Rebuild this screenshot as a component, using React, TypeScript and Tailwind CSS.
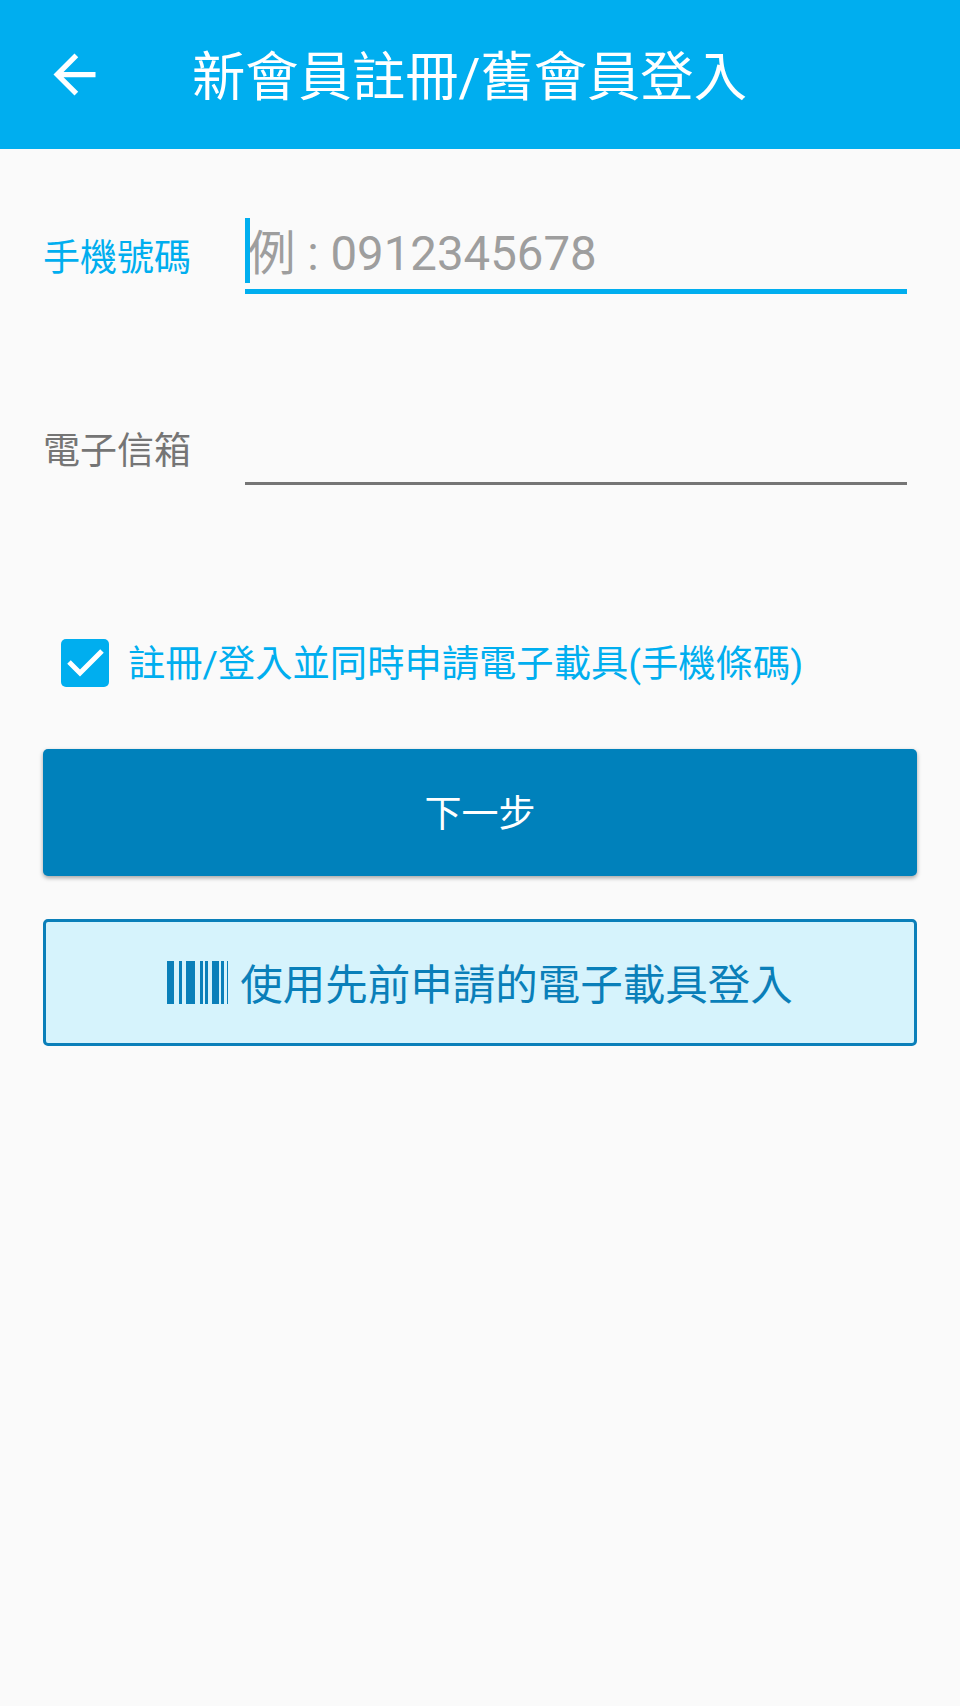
const fontStack = 'font-["Roboto","Noto_Sans_CJK_TC",sans-serif]';

function BackArrow() {
  return (
    <svg viewBox="0 0 24 24" className="h-[63px] w-[63px] shrink-0" fill="#ffffff">
      <path d="M20 11H7.83l5.59-5.59L12 4l-8 8 8 8 1.41-1.41L7.83 13H20v-2z" />
    </svg>
  );
}

function BarcodeIcon() {
  // bar positions read off the reference
  const bars = [
    [0, 7],
    [12, 3],
    [19, 9],
    [33, 3],
    [38, 3],
    [45, 7],
    [54, 3],
    [60, 1],
  ];
  return (
    <svg viewBox="0 0 61 43" className="h-[43px] w-[61px] shrink-0" fill="#0a7fb9">
      {bars.map(([x, w]) => (
        <rect key={x} x={x} y={0} width={w} height={43} />
      ))}
    </svg>
  );
}

export default function App() {
  return (
    <div className={`min-h-[1706px] w-[960px] bg-[#fafafa] ${fontStack}`}>
      <header className="flex h-[149px] items-center bg-[#00aeef] pl-[43px]">
        <BackArrow />
        <h1 className="mt-[8px] ml-[86px] text-[53.3px] leading-none font-normal text-white">新會員註冊/舊會員登入</h1>
      </header>

      <main className="px-[43px]">
        <div className="mt-[69px] flex items-start">
          <label className="mt-[16px] w-[202px] shrink-0 text-[37px] leading-[50px] text-[#00aeef]">手機號碼</label>
          <div className="relative mr-[10px] flex-1">
            <div className="absolute top-0 left-0 h-[65px] w-[5px] bg-[#00aeef]" />
            <input
              readOnly
              placeholder="例 : 0912345678"
              className="block h-[76px] w-full border-b-[5px] border-[#00aeef] pl-[3px] text-[47.4px] outline-none placeholder:text-[#9e9e9e]"
            />
          </div>
        </div>

        <div className="mt-[118px] flex items-start">
          <label className="mt-[15px] w-[202px] shrink-0 text-[37px] leading-[50px] text-[#757575]">電子信箱</label>
          <div className="mr-[10px] h-[73px] flex-1 border-b-[3px] border-[#757575]" />
        </div>

        <div className="mt-[152px] ml-[18px] flex items-center">
          <div className="flex h-[48px] w-[48px] shrink-0 items-center justify-center rounded-[5px] bg-[#00aeef]">
            <svg viewBox="0 0 48 48" className="h-[48px] w-[48px]" fill="none" stroke="#ffffff" strokeWidth="5">
              <path d="M8 23l11 11L41 12" />
            </svg>
          </div>
          <span className="mt-[2px] ml-[19px] text-[37.3px] leading-[50px] whitespace-nowrap text-[#00aeef]">
            註冊/登入並同時申請電子載具(手機條碼)
          </span>
        </div>

        <button className="mt-[60px] flex h-[127px] w-[874px] items-center justify-center rounded-[5px] bg-[#0081bb] pt-[4px] text-[37px] text-white shadow-[0_2px_4px_rgba(0,0,0,0.35)]">
          下一步
        </button>

        <button className="mt-[43px] flex h-[127px] w-[874px] items-center justify-center rounded-[5px] border-[3px] border-[#0a7fb9] bg-[#d6f3fc] text-[42.5px] text-[#0a7fb9]">
          <BarcodeIcon />
          <span className="mt-[7px] ml-[12px]">使用先前申請的電子載具登入</span>
        </button>
      </main>
    </div>
  );
}
